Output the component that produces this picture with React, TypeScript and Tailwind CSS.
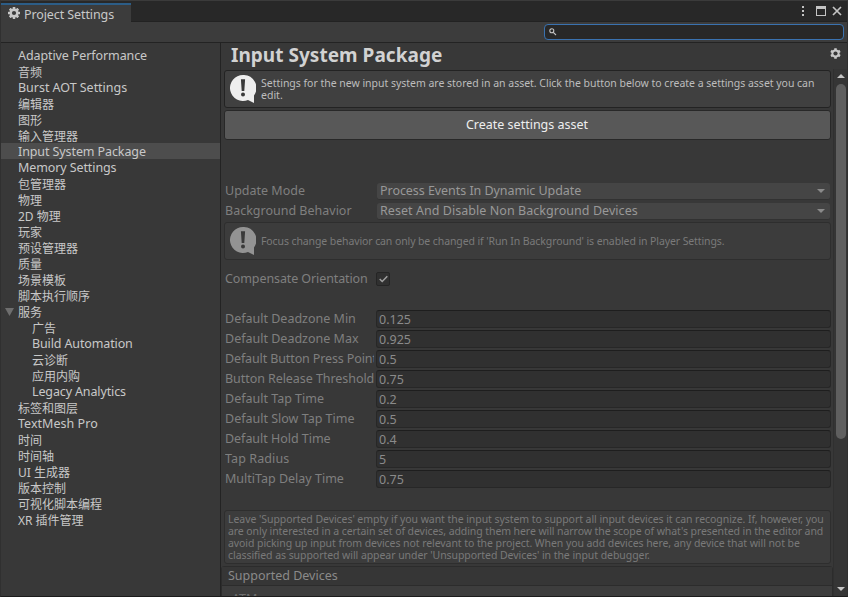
import React from 'react';

type Item = { label: string; track?: string; child?: boolean; open?: boolean; active?: boolean };

const CJK = 'text-[12px] pt-1';

const items: Item[] = [
  { label: 'Adaptive Performance', track: 'pt-[2px] tracking-[-0.1px]' },
  { label: '音频' },
  { label: 'Burst AOT Settings', track: 'pt-[2px] tracking-[-0.03px]' },
  { label: '编辑器' },
  { label: '图形' },
  { label: '输入管理器' },
  { label: 'Input System Package', track: 'pt-[2px] tracking-[-0.1px]', active: true },
  { label: 'Memory Settings', track: 'pt-[2px] tracking-[-0.1px]' },
  { label: '包管理器' },
  { label: '物理' },
  { label: '2D 物理' },
  { label: '玩家' },
  { label: '预设管理器' },
  { label: '质量' },
  { label: '场景模板' },
  { label: '脚本执行顺序' },
  { label: '服务', open: true },
  { label: '广告', child: true },
  { label: 'Build Automation', track: 'pt-[2px] tracking-[-0.13px]', child: true },
  { label: '云诊断', child: true },
  { label: '应用内购', child: true },
  { label: 'Legacy Analytics', track: 'pt-[2px] tracking-[-0.13px]', child: true },
  { label: '标签和图层' },
  { label: 'TextMesh Pro', track: 'pt-[2px] tracking-[0.03px]' },
  { label: '时间' },
  { label: '时间轴' },
  { label: 'UI 生成器' },
  { label: '版本控制' },
  { label: '可视化脚本编程' },
  { label: 'XR 插件管理' },
];

const fields: [string, string, string][] = [
  ['Default Deadzone Min', '0.125', ''],
  ['Default Deadzone Max', '0.925', ''],
  ['Default Button Press Point', '0.5', 'tracking-[-0.12px]'],
  ['Button Release Threshold', '0.75', 'tracking-[-0.06px]'],
  ['Default Tap Time', '0.2', ''],
  ['Default Slow Tap Time', '0.5', ''],
  ['Default Hold Time', '0.4', '-tracking-[0.03px]'],
  ['Tap Radius', '5', 'tracking-[0.1px]'],
  ['MultiTap Delay Time', '0.75', ''],
];

function TabGear() {
  return (
    <svg viewBox="0 0 12 12" className="h-3 w-3 shrink-0 text-[#c8c8c8]">
      <g fill="currentColor">
        <rect x="4.700" y="0" width="2.600" height="12" rx="0.400" />
        <rect x="4.700" y="0" width="2.600" height="12" rx="0.400" transform="rotate(45 6 6)" />
        <rect x="4.700" y="0" width="2.600" height="12" rx="0.400" transform="rotate(90 6 6)" />
        <rect x="4.700" y="0" width="2.600" height="12" rx="0.400" transform="rotate(135 6 6)" />
        <circle cx="6" cy="6" r="4.500" />
      </g>
      <circle cx="6" cy="6" r="2.100" className="fill-[#3c3c3c]" />
    </svg>
  );
}

function HeaderGear() {
  return (
    <svg viewBox="0 0 11 11" className="h-[11px] w-[11px] shrink-0 text-[#c8c8c8]">
      <g fill="currentColor">
        <rect x="4.200" y="0.300" width="2.600" height="10.400" rx="0.300" />
        <rect x="4.200" y="0.300" width="2.600" height="10.400" rx="0.300" transform="rotate(60 5.5 5.5)" />
        <rect x="4.200" y="0.300" width="2.600" height="10.400" rx="0.300" transform="rotate(120 5.5 5.5)" />
        <circle cx="5.500" cy="5.500" r="4" />
      </g>
      <circle cx="5.500" cy="5.500" r="2.100" className="fill-[#383838]" />
    </svg>
  );
}

function InfoBubble({ className }: { className: string }) {
  return (
    <svg viewBox="0 0 26 28" className={`h-[28px] w-[26px] shrink-0 ${className}`}>
      <path fill="currentColor" d="M13 0a13 13 0 1 0 5 25l6 3v-7.500A13 13 0 0 0 13 0z" />
      <path className="fill-[#3a3a3a]" d="M10.900 4.300h4.200l-.8 11.700h-2.600zM13 17.600a2 2 0 1 1 0 4 2 2 0 0 1 0-4z" />
    </svg>
  );
}

function Dropdown({ label, value, track }: { label: string; value: string; track: string }) {
  return (
    <div className="flex h-5 items-start pl-1">
      <div className="h-[17px] w-[152px] shrink-0 text-[12.5px] leading-[16px] text-[#7f7f7f]">{label}</div>
      <div className="mr-[3px] flex h-[17px] flex-1 items-center justify-between rounded-[3px] border-b border-[#323232] bg-[#454545] pr-[5px] pl-[3px] text-[12.5px] leading-[16px] text-[#989898]">
        <span className={track}>{value}</span>
        <svg viewBox="0 0 8 4" className="h-1 w-2 fill-[#8a8a8a]"><path d="M0 0h8L4 4z" /></svg>
      </div>
    </div>
  );
}

export default function App() {
  return (
    <div className="flex h-[597px] w-[848px] flex-col overflow-hidden border-x border-t border-b border-x-[#303030] border-t-[#3b3b3b] border-b-[#1c1c1c] bg-[#383838] font-['Noto_Sans','Noto_Sans_CJK_SC',sans-serif] whitespace-nowrap text-[#c8c8c8]">
      <div className="flex h-[21px] shrink-0 justify-between border-b border-[#222222] bg-[#282828] pt-[2px]">
        <div className="-mb-px flex w-[130px] items-start border-t-2 border-[#2c5d87] bg-[#3c3c3c] pt-[2px] pl-[7px]">
          <TabGear />
          <span className="ml-1 text-[12.5px] leading-4 tracking-[-0.1px]">Project Settings</span>
        </div>
        <div className="flex items-start pt-[3px] pr-[5px] text-[#c4c4c4]">
          <svg viewBox="0 0 3 10" className="mr-[11px] h-[10px] w-[3px]" fill="currentColor"><path d="M0 0h2v2H0zM0 4h2v2H0zM0 8h2v2H0z" /></svg>
          <svg viewBox="0 0 10 10" className="mr-[6px] h-[10px] w-[10px]" fill="currentColor"><path fillRule="evenodd" d="M0 0h10v10H0zM1 3v6h8V3z" /></svg>
          <svg viewBox="0 0 10 10" className="h-[10px] w-[10px]" fill="none" stroke="currentColor" strokeWidth="1.700"><path d="M1 1l8 8M9 1L1 9" /></svg>
        </div>
      </div>
      <div className="flex h-[21px] shrink-0 justify-end border-b border-[#232323] bg-[#3c3c3c] pt-[2px] pr-[3px]">
        <div className="flex h-4 w-[300px] items-center rounded-[4px] border border-[#3a72b0] bg-[#282828] pl-1">
          <svg viewBox="0 0 8 8" className="h-2 w-2 text-[#c4c4c4]" fill="none" stroke="currentColor" strokeWidth="1.100"><circle cx="2.800" cy="2.800" r="2" /><path d="M4.300 4.300L7 7" /></svg>
        </div>
      </div>
      <div className="flex min-h-0 flex-1">
        <nav className="w-[220px] shrink-0 border-r border-[#232323] pt-1">
          {items.map((it) => (
            <div key={it.label} className={`flex h-4 items-center text-[12.5px] leading-4 ${it.child ? 'pl-[31px]' : it.open ? 'pl-1' : 'pl-[17px]'} ${it.active ? 'bg-[#4d4d4d]' : ''}`}>
              {it.open && <svg viewBox="0 0 9 8" className="mt-px mr-1 h-2 w-[9px] fill-[#6e6e6e]"><path d="M0 0h9L4.500 8z" /></svg>}
              <span className={it.track ? it.track : CJK}>{it.label}</span>
            </div>
          ))}
        </nav>
        <main className="flex min-w-0 flex-1 flex-col">
          <div className="flex h-[26px] shrink-0 items-start justify-between pr-[6px] pl-[10px]">
            <h1 className="text-[19px] leading-6 font-bold tracking-[0.03px] text-[#d2d2d2]">Input System Package</h1>
            <div className="pt-[5px]"><HeaderGear /></div>
          </div>
          <div className="flex min-h-0 flex-1">
            <div className="flex w-[612px] flex-col overflow-hidden">
              <div className="mt-px mr-[2px] ml-[3px] flex h-[38px] shrink-0 items-center rounded-[3px] border border-[#232323] bg-[#404040] pl-[5px] text-[#bdbdbd]">
                <InfoBubble className="text-[#eeeeee]" />
                <div className="ml-[5px] text-[10.5px] leading-3">
                  <div className="tracking-[-0.02px]">Settings for the new input system are stored in an asset. Click the button below to create a settings asset you can</div>
                  <div>edit.</div>
                </div>
              </div>
              <button className="mt-[2px] mr-[2px] ml-[3px] flex h-[30px] shrink-0 items-center justify-center rounded-[3px] border border-[#282828] bg-[#585858] pr-px text-[12.5px] text-[#eeeeee]">Create settings asset</button>
              <div className="mt-[43px] flex shrink-0 flex-col">
                <Dropdown label="Update Mode" value="Process Events In Dynamic Update" track="tracking-[-0.05px]" />
                <Dropdown label="Background Behavior" value="Reset And Disable Non Background Devices" track="tracking-[0.05px]" />
              </div>
              <div className="-mt-px mr-[2px] ml-[3px] flex h-[38px] shrink-0 items-center rounded-[3px] border border-[#2e2e2e] bg-[#3c3c3c] pl-[5px] text-[#7a7a7a]">
                <InfoBubble className="text-[#939393]" />
                <span className="ml-[5px] text-[10.5px] leading-3 tracking-[-0.1px]">Focus change behavior can only be changed if 'Run In Background' is enabled in Player Settings.</span>
              </div>
              <div className="mt-[10px] flex h-[18px] shrink-0 items-center pl-1">
                <span className="w-[151px] text-[12.5px] leading-[18px] tracking-[-0.1px] text-[#7f7f7f]">Compensate Orientation</span>
                <span className="flex h-[14px] w-[14px] items-center justify-center rounded-[2px] border border-[#252525] bg-[#303030]">
                  <svg viewBox="0 0 9 8" className="h-2 w-[9px] text-[#a0a0a0]" fill="none" stroke="currentColor" strokeWidth="1.500"><path d="M.700 4L3.200 6.500 8.300 1.200" /></svg>
                </span>
              </div>
              <div className="mt-[22px] flex shrink-0 flex-col">
                {fields.map(([label, value, track]) => (
                  <div key={label} className="flex h-5 items-start pl-1">
                    <span className={`w-[149px] shrink-0 overflow-hidden text-[12.5px] leading-[17px] text-[#7f7f7f] ${track}`}>{label}</span>
                    <span className="mr-[2px] ml-[2px] h-[18px] flex-1 rounded-[3px] border border-[#272727] border-t-[#1e1e1e] bg-[#303030] pl-[2px] text-[12.5px] leading-[17px] text-[#8a8a8a]">{value}</span>
                  </div>
                ))}
              </div>
              <div className="mt-5 mr-[2px] ml-[3px] flex h-[54px] shrink-0 flex-col justify-center rounded-[3px] border border-[#2e2e2e] bg-[#3c3c3c] pl-[3px] text-[10.5px] leading-3 text-[#797979]">
                <span className="tracking-[-0.06px]">Leave 'Supported Devices' empty if you want the input system to support all input devices it can recognize. If, however, you</span>
                <span className="tracking-[-0.08px]">are only interested in a certain set of devices, adding them here will narrow the scope of what's presented in the editor and</span>
                <span className="tracking-[-0.07px]">avoid picking up input from devices not relevant to the project. When you add devices here, any device that will not be</span>
                <span className="tracking-[-0.06px]">classified as supported will appear under 'Unsupported Devices' in the input debugger.</span>
              </div>
              <div className="mt-[2px] flex h-[60px] shrink-0 flex-col rounded-[3px] border border-[#2c2c2c] bg-[#3d3d3d]">
                <div className="h-[19px] shrink-0 border-b border-[#2c2c2c] bg-[#363636] pl-[6px] text-[12.5px] leading-[18px] text-[#8a8a8a]">Supported Devices</div>
                <div className="pt-[4px] pl-[10px] text-[12.5px] leading-[18px] text-[#6e6e6e]">ATM:</div>
              </div>
            </div>
            <div className="flex flex-1 flex-col items-center border-l border-[#303030] bg-[#353535] pt-[5px] pb-[5px]">
              <svg viewBox="0 0 8 4" className="h-1 w-2 shrink-0 fill-[#c4c4c4]"><path d="M4 0l4 4H0z" /></svg>
              <div className="mt-[6px] h-[355px] w-[10px] shrink-0 rounded-full bg-[#5f5f5f]" />
              <svg viewBox="0 0 8 4" className="mt-auto h-1 w-2 shrink-0 fill-[#c4c4c4]"><path d="M0 0h8L4 4z" /></svg>
            </div>
          </div>
        </main>
      </div>
    </div>
  );
}
